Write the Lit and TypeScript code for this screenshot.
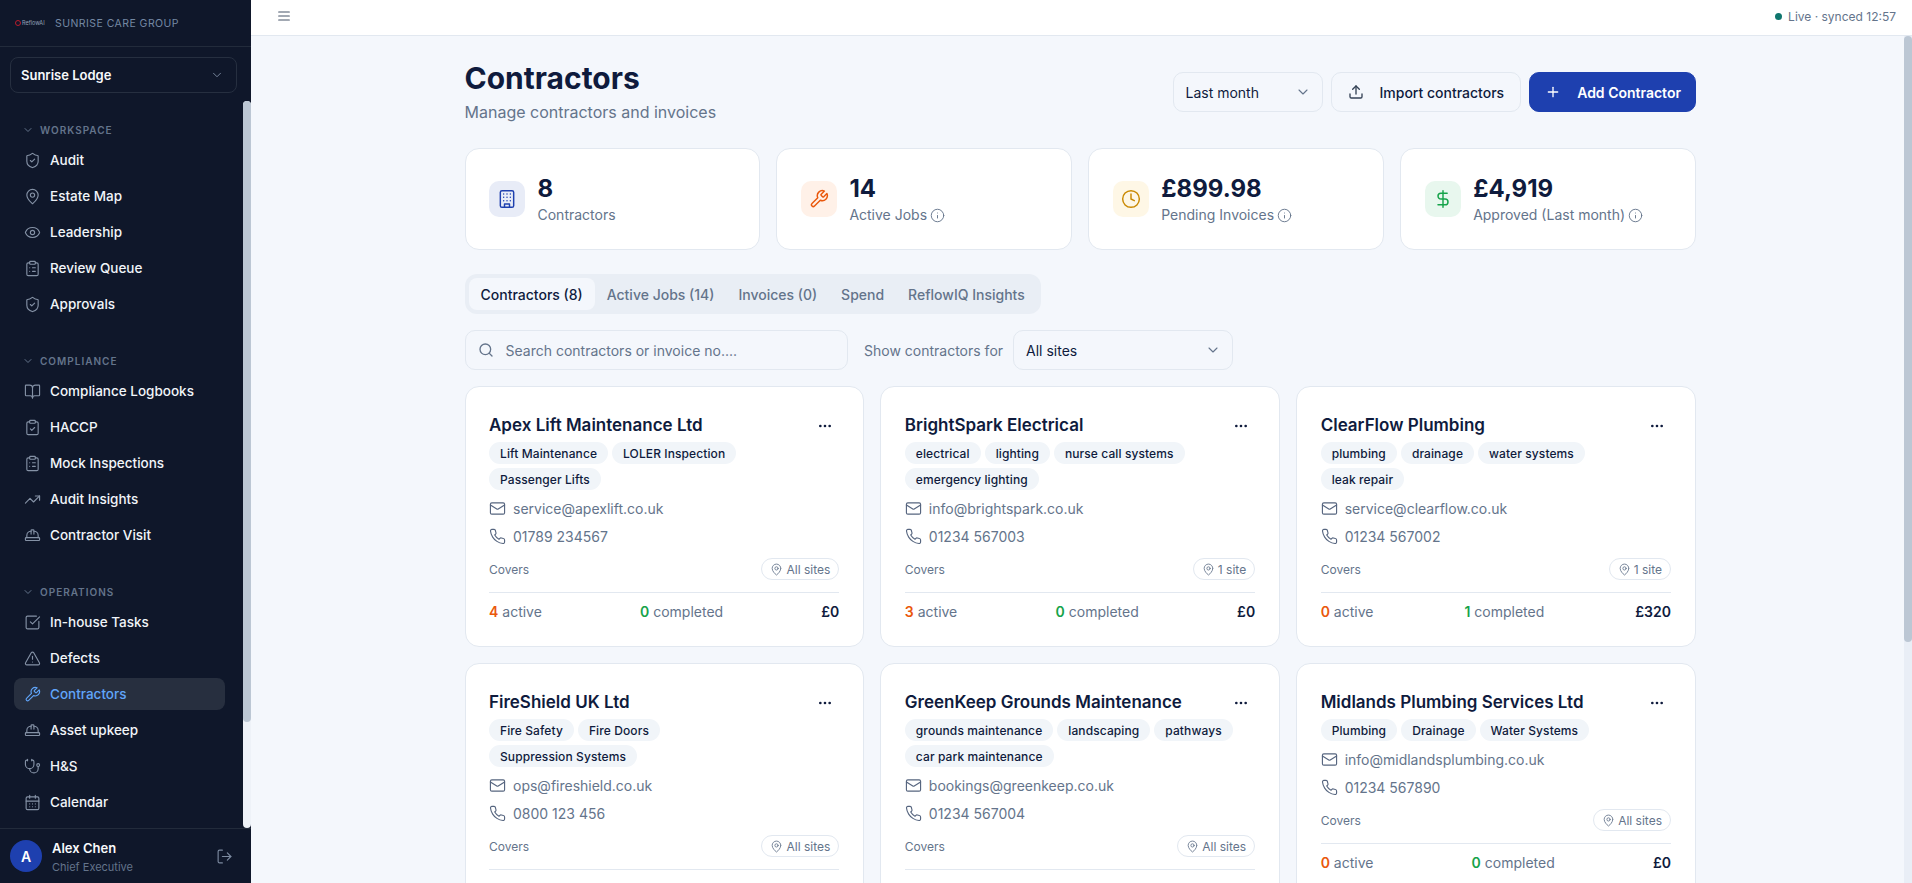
import { LitElement, html, css, svg } from 'lit';
import { customElement } from 'lit/decorators.js';

// lucide-style icon bodies, all on a 24 box
const ICONS: Record<string, unknown> = {
  shield: svg`<path d="M20 13c0 5-3.5 7.5-7.66 8.95a1 1 0 0 1-.67-.01C7.5 20.5 4 18 4 13V6a1 1 0 0 1 1-1c2 0 4.5-1.2 6.24-2.72a1.17 1.17 0 0 1 1.52 0C14.51 3.81 17 5 19 5a1 1 0 0 1 1 1z"/><path d="m9 12 2 2 4-4"/>`,
  pin: svg`<path d="M20 10c0 4.993-5.539 10.193-7.399 11.799a1 1 0 0 1-1.202 0C9.539 20.193 4 14.993 4 10a8 8 0 0 1 16 0"/><circle cx="12" cy="10" r="3"/>`,
  eye: svg`<path d="M2.062 12.348a1 1 0 0 1 0-.696 10.75 10.75 0 0 1 19.876 0 1 1 0 0 1 0 .696 10.75 10.75 0 0 1-19.876 0"/><circle cx="12" cy="12" r="3"/>`,
  list: svg`<rect x="8" y="2" width="8" height="4" rx="1"/><path d="M16 4h2a2 2 0 0 1 2 2v14a2 2 0 0 1-2 2H6a2 2 0 0 1-2-2V6a2 2 0 0 1 2-2h2"/><path d="M12 11h4"/><path d="M12 16h4"/><path d="M8 11h.01"/><path d="M8 16h.01"/>`,
  book: svg`<path d="M12 7v14"/><path d="M3 18a1 1 0 0 1-1-1V4a1 1 0 0 1 1-1h5a4 4 0 0 1 4 4 4 4 0 0 1 4-4h5a1 1 0 0 1 1 1v13a1 1 0 0 1-1 1h-6a3 3 0 0 0-3 3 3 3 0 0 0-3-3z"/>`,
  clipcheck: svg`<rect x="8" y="2" width="8" height="4" rx="1"/><path d="M16 4h2a2 2 0 0 1 2 2v14a2 2 0 0 1-2 2H6a2 2 0 0 1-2-2V6a2 2 0 0 1 2-2h2"/><path d="m9 14 2 2 4-4"/>`,
  trend: svg`<path d="M16 7h6v6"/><path d="m22 7-8.5 8.5-5-5L2 17"/>`,
  hat: svg`<path d="M10 10V5a1 1 0 0 1 1-1h2a1 1 0 0 1 1 1v5"/><path d="M14 6a6 6 0 0 1 6 6v3"/><path d="M4 15v-3a6 6 0 0 1 6-6"/><rect x="2" y="15" width="20" height="4" rx="1"/>`,
  check: svg`<path d="M21 10.5V19a2 2 0 0 1-2 2H5a2 2 0 0 1-2-2V5a2 2 0 0 1 2-2h12.5"/><path d="m9 11 3 3L22 4"/>`,
  alert: svg`<path d="m21.73 18-8-14a2 2 0 0 0-3.48 0l-8 14A2 2 0 0 0 4 21h16a2 2 0 0 0 1.73-3"/><path d="M12 9v4"/><path d="M12 17h.01"/>`,
  wrench: svg`<path d="M14.7 6.3a1 1 0 0 0 0 1.4l1.6 1.6a1 1 0 0 0 1.4 0l3.77-3.77a6 6 0 0 1-7.94 7.94l-6.91 6.91a2.12 2.12 0 0 1-3-3l6.91-6.91a6 6 0 0 1 7.94-7.94l-3.76 3.76z"/>`,
  steth: svg`<path d="M11 2v2"/><path d="M5 2v2"/><path d="M5 3H4a2 2 0 0 0-2 2v4a6 6 0 0 0 12 0V5a2 2 0 0 0-2-2h-1"/><path d="M8 15a6 6 0 0 0 12 0v-3"/><circle cx="20" cy="10" r="2"/>`,
  calendar: svg`<path d="M8 2v4"/><path d="M16 2v4"/><rect x="3" y="4" width="18" height="18" rx="2"/><path d="M3 10h18"/><path d="M8 14h.01"/><path d="M12 14h.01"/><path d="M16 14h.01"/><path d="M8 18h.01"/><path d="M12 18h.01"/><path d="M16 18h.01"/>`,
  logout: svg`<path d="m16 17 5-5-5-5"/><path d="M21 12H9"/><path d="M9 21H5a2 2 0 0 1-2-2V5a2 2 0 0 1 2-2h4"/>`,
  chevron: svg`<path d="m6 9 6 6 6-6"/>`,
  menu: svg`<path d="M4 12h16"/><path d="M4 18h16"/><path d="M4 6h16"/>`,
  upload: svg`<path d="M21 15v4a2 2 0 0 1-2 2H5a2 2 0 0 1-2-2v-4"/><path d="m17 8-5-5-5 5"/><path d="M12 3v12"/>`,
  plus: svg`<path d="M5 12h14"/><path d="M12 5v14"/>`,
  building: svg`<rect x="4" y="2" width="16" height="20" rx="2"/><path d="M9 22v-4h6v4"/><path d="M8 6h.01"/><path d="M16 6h.01"/><path d="M12 6h.01"/><path d="M12 10h.01"/><path d="M12 14h.01"/><path d="M16 10h.01"/><path d="M16 14h.01"/><path d="M8 10h.01"/><path d="M8 14h.01"/>`,
  clock: svg`<circle cx="12" cy="12" r="10"/><path d="M12 6v6l4 2"/>`,
  dollar: svg`<path d="M12 2v20"/><path d="M17 5H9.5a3.5 3.5 0 0 0 0 7h5a3.5 3.5 0 0 1 0 7H6"/>`,
  info: svg`<circle cx="12" cy="12" r="10"/><path d="M12 16v-4"/><path d="M12 8h.01"/>`,
  search: svg`<circle cx="11" cy="11" r="8"/><path d="m21 21-4.3-4.3"/>`,
  more: svg`<circle cx="12" cy="12" r="1"/><circle cx="19" cy="12" r="1"/><circle cx="5" cy="12" r="1"/>`,
  mail: svg`<rect x="2" y="4" width="20" height="16" rx="2"/><path d="m22 7-8.97 5.7a1.94 1.94 0 0 1-2.06 0L2 7"/>`,
  phone: svg`<path d="M22 16.92v3a2 2 0 0 1-2.18 2 19.79 19.79 0 0 1-8.63-3.07 19.5 19.5 0 0 1-6-6 19.79 19.79 0 0 1-3.07-8.67A2 2 0 0 1 4.11 2h3a2 2 0 0 1 2 1.72 12.84 12.84 0 0 0 .7 2.81 2 2 0 0 1-.45 2.11L8.09 9.91a16 16 0 0 0 6 6l1.27-1.27a2 2 0 0 1 2.11-.45 12.84 12.84 0 0 0 2.81.7A2 2 0 0 1 22 16.92z"/>`,
};

const icon = (name: string, size = 16, stroke = 2) => html`<svg
  width=${size}
  height=${size}
  viewBox="0 0 24 24"
  fill="none"
  stroke="currentColor"
  stroke-width=${stroke}
  stroke-linecap="round"
  stroke-linejoin="round"
  style="flex:none;display:block"
>${ICONS[name]}</svg>`;

const NAV = [
  {
    title: 'WORKSPACE',
    items: [
      ['shield', 'Audit'],
      ['pin', 'Estate Map'],
      ['eye', 'Leadership'],
      ['list', 'Review Queue'],
      ['shield', 'Approvals'],
    ],
  },
  {
    title: 'COMPLIANCE',
    items: [
      ['book', 'Compliance Logbooks'],
      ['clipcheck', 'HACCP'],
      ['list', 'Mock Inspections'],
      ['trend', 'Audit Insights'],
      ['hat', 'Contractor Visit'],
    ],
  },
  {
    title: 'OPERATIONS',
    items: [
      ['check', 'In-house Tasks'],
      ['alert', 'Defects'],
      ['wrench', 'Contractors'],
      ['hat', 'Asset upkeep'],
      ['steth', 'H&S'],
      ['calendar', 'Calendar'],
    ],
  },
];

const STATS = [
  { icon: 'building', tone: 'blue', value: '8', label: 'Contractors', info: false },
  { icon: 'wrench', tone: 'orange', value: '14', label: 'Active Jobs', info: true },
  { icon: 'clock', tone: 'yellow', value: '£899.98', label: 'Pending Invoices', info: true },
  { icon: 'dollar', tone: 'green', value: '£4,919', label: 'Approved (Last month)', info: true },
];

const TABS = ['Contractors (8)', 'Active Jobs (14)', 'Invoices (0)', 'Spend', 'ReflowIQ Insights'];

// tags are kept per row, the reference breaks them earlier than plain wrapping would
const CONTRACTORS = [
  { name: 'Apex Lift Maintenance Ltd', tags: [['Lift Maintenance', 'LOLER Inspection'], ['Passenger Lifts']], email: 'service@apexlift.co.uk', phone: '01789 234567', covers: 'All sites', active: 4, done: 0, total: '£0' },
  { name: 'BrightSpark Electrical', tags: [['electrical', 'lighting', 'nurse call systems'], ['emergency lighting']], email: 'info@brightspark.co.uk', phone: '01234 567003', covers: '1 site', active: 3, done: 0, total: '£0' },
  { name: 'ClearFlow Plumbing', tags: [['plumbing', 'drainage', 'water systems'], ['leak repair']], email: 'service@clearflow.co.uk', phone: '01234 567002', covers: '1 site', active: 0, done: 1, total: '£320' },
  { name: 'FireShield UK Ltd', tags: [['Fire Safety', 'Fire Doors'], ['Suppression Systems']], email: 'ops@fireshield.co.uk', phone: '0800 123 456', covers: 'All sites', active: 3, done: 0, total: '£0' },
  { name: 'GreenKeep Grounds Maintenance', tags: [['grounds maintenance', 'landscaping', 'pathways'], ['car park maintenance']], email: 'bookings@greenkeep.co.uk', phone: '01234 567004', covers: 'All sites', active: 2, done: 0, total: '£0' },
  { name: 'Midlands Plumbing Services Ltd', tags: [['Plumbing', 'Drainage', 'Water Systems']], email: 'info@midlandsplumbing.co.uk', phone: '01234 567890', covers: 'All sites', active: 0, done: 0, total: '£0' },
  { name: 'SafeAir Ventilation', tags: [['ventilation', 'air quality'], ['duct cleaning']], email: 'hello@safeair.co.uk', phone: '01234 567005', covers: '1 site', active: 1, done: 0, total: '£0' },
  { name: 'TotalCare Cleaning Ltd', tags: [['deep cleaning', 'kitchen hygiene']], email: 'jobs@totalcare.co.uk', phone: '01234 567006', covers: 'All sites', active: 1, done: 0, total: '£0' },
];

@customElement('app-root')
export class AppRoot extends LitElement {
  static override styles = css`
    :host {
      display: flex;
      height: 100vh;
      overflow: hidden;
      font-family: Inter, 'Noto Sans', sans-serif;
      color: #0f1b3d;
      background: #f4f7fc;
    }

    /* scrollbars: headless hides the native ones, so the tracks are drawn */
    .track {
      width: 8px;
      flex: none;
      background: #e9eef6;
    }
    .thumb {
      background: #bcc7d4;
      border-radius: 4px;
    }
    .nav-track {
      border-radius: 4px;
      background: #eef2f8;
    }
    .nav-track .thumb {
      height: 621px;
    }
    .main-track .thumb {
      height: 606px;
    }
    .nav,
    .scroll {
      flex: 1;
      min-width: 0;
      overflow-y: auto;
      scrollbar-width: none;
    }

    /* sidebar */
    .sidebar {
      width: 251px;
      flex: none;
      display: flex;
      flex-direction: column;
      background: #0f172a;
    }
    .brand {
      height: 46px;
      flex: none;
      display: flex;
      align-items: center;
      gap: 13px;
      padding-left: 15px;
      border-bottom: 1px solid #222b3b;
    }
    .logo {
      display: flex;
      align-items: center;
      gap: 1px;
      width: 27px;
      font-size: 5.5px;
      color: #94a3b8;
      white-space: nowrap;
    }
    .ring {
      width: 6px;
      height: 6px;
      flex: none;
      border: 1.5px solid #b91c2c;
      border-radius: 50%;
      box-sizing: border-box;
    }
    .org {
      font-size: 10.5px;
      letter-spacing: 0.45px;
      color: #7488a3;
    }
    .site-wrap {
      flex: none;
      padding: 10px 14px 8px 10px;
    }
    .site {
      height: 36px;
      box-sizing: border-box;
      display: flex;
      align-items: center;
      justify-content: space-between;
      padding: 0 12px 0 10px;
      border: 1px solid #262f40;
      border-radius: 8px;
      font-size: 13px;
      font-weight: 600;
      color: #f8fafc;
    }
    .site svg {
      color: #7c8aa0;
    }
    .nav-row {
      flex: 1;
      min-height: 0;
      display: flex;
    }
    .nav {
      padding: 21px 18px 0 14px;
    }
    .section + .section {
      margin-top: 33px;
    }
    .section-title {
      height: 16px;
      display: flex;
      align-items: center;
      gap: 6px;
      padding-left: 8px;
      margin-bottom: 6px;
      font-size: 10px;
      font-weight: 600;
      letter-spacing: 1px;
      color: #64748b;
    }
    .items {
      display: flex;
      flex-direction: column;
      gap: 4px;
    }
    .item {
      height: 32px;
      display: flex;
      align-items: center;
      gap: 9px;
      padding-left: 10px;
      border-radius: 8px;
      font-size: 13.5px;
      font-weight: 500;
      color: #f1f5f9;
    }
    .item svg {
      color: #8592a6;
    }
    .item.active {
      background: #272f3f;
      color: #60a5fa;
    }
    .item.active svg {
      color: #60a5fa;
    }
    .user {
      height: 55px;
      flex: none;
      box-sizing: border-box;
      display: flex;
      align-items: center;
      gap: 10px;
      padding: 0 18px 0 10px;
      border-top: 1px solid #222b3b;
    }
    .avatar {
      width: 32px;
      height: 32px;
      flex: none;
      display: flex;
      align-items: center;
      justify-content: center;
      border-radius: 50%;
      background: #1e40af;
      color: #fff;
      font-size: 14px;
      font-weight: 600;
    }
    .who {
      flex: 1;
      display: flex;
      flex-direction: column;
      gap: 3px;
      padding-top: 2px;
    }
    .who b {
      font-size: 13px;
      line-height: 16px;
      font-weight: 600;
      color: #f8fafc;
    }
    .who span {
      font-size: 11px;
      line-height: 16px;
      color: #64748b;
    }
    .user > svg {
      color: #7c8aa0;
    }

    /* main column */
    .main {
      flex: 1;
      min-width: 0;
      display: flex;
      flex-direction: column;
    }
    .topbar {
      height: 36px;
      flex: none;
      box-sizing: border-box;
      display: flex;
      align-items: center;
      justify-content: space-between;
      padding: 0 16px 3px 25px;
      background: #fff;
      border-bottom: 1px solid #e2e8f0;
      color: #475569;
    }
    .live {
      display: flex;
      align-items: center;
      gap: 6px;
      font-size: 12px;
      color: #64748b;
    }
    .dot {
      width: 7px;
      height: 7px;
      border-radius: 50%;
      background: #0f766e;
    }
    .main-row {
      flex: 1;
      min-height: 0;
      display: flex;
    }
    .content {
      width: 1231.5px;
      margin-left: 213.5px;
      padding: 24px 0;
      display: flex;
      flex-direction: column;
      gap: 24px;
    }
    .head {
      display: flex;
      align-items: center;
      justify-content: space-between;
    }
    h1 {
      margin: 0 0 4px;
      font-size: 30px;
      line-height: 36px;
      font-weight: 700;
    }
    .sub {
      font-size: 16px;
      line-height: 24px;
      color: #64748b;
    }
    .actions {
      display: flex;
      gap: 8px;
    }
    .ctl {
      height: 40px;
      box-sizing: border-box;
      display: flex;
      align-items: center;
      border: 1px solid #e2e8f0;
      border-radius: 10px;
      font-size: 14px;
    }
    .select {
      justify-content: space-between;
      padding: 0 11px 0 12px;
    }
    .select svg {
      color: #64748b;
    }
    .period {
      width: 150px;
    }
    .btn {
      gap: 16px;
      padding: 0 16px;
      font-weight: 500;
    }
    .btn svg {
      color: #334155;
    }
    .btn.primary {
      padding: 0 14px 0 15px;
      background: #1e40af;
      border-color: #1e40af;
      color: #fff;
      font-weight: 600;
    }
    .btn.primary svg {
      color: #fff;
    }
    .stats {
      display: grid;
      grid-template-columns: repeat(4, 1fr);
      gap: 16px;
    }
    .panel {
      background: #fff;
      border: 1px solid #e2e8f0;
      border-radius: 14px;
    }
    .stat {
      display: flex;
      align-items: center;
      gap: 12.5px;
      padding: 24px 24px 24px 23.5px;
    }
    .stat-icon {
      width: 36px;
      height: 36px;
      flex: none;
      display: flex;
      align-items: center;
      justify-content: center;
      border-radius: 10px;
    }
    .blue {
      background: #e8ecf7;
      color: #1e40af;
    }
    .orange {
      background: #fff1e8;
      color: #ea580c;
    }
    .yellow {
      background: #fef7e6;
      color: #ca8a04;
    }
    .green {
      background: #e8f7ee;
      color: #16a34a;
    }
    .value {
      font-size: 24px;
      line-height: 32px;
      font-weight: 700;
    }
    .label {
      display: flex;
      align-items: center;
      gap: 3px;
      font-size: 14px;
      line-height: 20px;
      color: #64748b;
    }
    .tabs-area {
      display: flex;
      flex-direction: column;
      gap: 16px;
    }
    .tabs {
      align-self: flex-start;
      display: flex;
      padding: 4px;
      background: #e9eef5;
      border-radius: 12px;
    }
    .tab {
      height: 32px;
      display: flex;
      align-items: center;
      padding: 0 12px;
      border-radius: 8px;
      font-size: 14px;
      font-weight: 500;
      color: #64748b;
    }
    .tab.active {
      background: #f4f7fc;
      color: #0f1b3d;
    }
    .filters {
      display: flex;
      align-items: center;
    }
    .search {
      width: 383.5px;
      gap: 12px;
      padding: 0 12px;
      color: #64748b;
    }
    .for {
      margin: 0 10px 0 16px;
      font-size: 14px;
      color: #64748b;
    }
    .sites {
      width: 220px;
    }
    .grid {
      display: grid;
      grid-template-columns: repeat(3, 1fr);
      gap: 16px;
    }
    .card {
      padding: 23px 24px 25px 23.5px;
    }
    .card-top {
      height: 32px;
      display: flex;
      justify-content: space-between;
      align-items: flex-start;
    }
    .card-name {
      padding-top: 1px;
      font-size: 17px;
      line-height: 28px;
      font-weight: 600;
    }
    .more {
      width: 28px;
      height: 32px;
      display: flex;
      align-items: center;
      justify-content: center;
    }
    .tags {
      display: flex;
      flex-direction: column;
      gap: 4px;
      margin-bottom: 8px;
    }
    .tag-row {
      display: flex;
      gap: 4px;
    }
    .tag {
      height: 22px;
      display: flex;
      align-items: center;
      padding: 0 11px;
      border-radius: 11px;
      background: #f1f5f9;
      font-size: 12px;
      font-weight: 500;
      letter-spacing: 0.1px;
    }
    .contact {
      height: 20px;
      display: flex;
      align-items: center;
      gap: 7px;
      margin-bottom: 8px;
      font-size: 14px;
      color: #64748b;
    }
    .contact svg {
      color: #56657f;
    }
    .covers {
      display: flex;
      align-items: center;
      justify-content: space-between;
      margin-top: 12px;
      padding-bottom: 12px;
      border-bottom: 1px solid #e2e8f0;
      font-size: 12px;
      color: #64748b;
    }
    .pill {
      height: 22px;
      box-sizing: border-box;
      display: flex;
      align-items: center;
      gap: 3px;
      padding: 0 8px;
      border: 1px solid #e2e8f0;
      border-radius: 11px;
    }
    .counts {
      display: flex;
      align-items: center;
      justify-content: space-between;
      height: 20px;
      margin-top: 8px;
      font-size: 14px;
      color: #64748b;
    }
    .counts b {
      font-weight: 600;
    }
    .num-active {
      color: #ea580c;
    }
    .num-done {
      color: #16a34a;
    }
    .counts .sum {
      color: #0f1b3d;
    }
  `;

  private renderNav() {
    return NAV.map(
      (section) => html`
        <div class="section">
          <div class="section-title">${icon('chevron', 12, 2)}${section.title}</div>
          <div class="items">
            ${section.items.map(
              ([ic, label]) => html`
                <div class="item ${label === 'Contractors' ? 'active' : ''}">${icon(ic, 17, 1.6)}${label}</div>
              `
            )}
          </div>
        </div>
      `
    );
  }

  private renderCard(c: (typeof CONTRACTORS)[number]) {
    return html`
      <div class="panel card">
        <div class="card-top">
          <div class="card-name">${c.name}</div>
          <div class="more">${icon('more', 16, 2)}</div>
        </div>
        <div class="tags">
          ${c.tags.map(
            (row) => html`<div class="tag-row">${row.map((t) => html`<span class="tag">${t}</span>`)}</div>`
          )}
        </div>
        <div class="contact">${icon('mail', 17, 1.6)}${c.email}</div>
        <div class="contact">${icon('phone', 17, 1.6)}${c.phone}</div>
        <div class="covers">
          <span>Covers</span>
          <span class="pill">${icon('pin', 13, 1.6)}${c.covers}</span>
        </div>
        <div class="counts">
          <span><b class="num-active">${c.active}</b> active</span>
          <span><b class="num-done">${c.done}</b> completed</span>
          <b class="sum">${c.total}</b>
        </div>
      </div>
    `;
  }

  override render() {
    return html`
      <aside class="sidebar">
        <div class="brand">
          <div class="logo"><span class="ring"></span>ReflowAI</div>
          <div class="org">SUNRISE CARE GROUP</div>
        </div>
        <div class="site-wrap">
          <div class="site">Sunrise Lodge ${icon('chevron', 14, 1.6)}</div>
        </div>
        <div class="nav-row">
          <nav class="nav">${this.renderNav()}</nav>
          <div class="track nav-track"><div class="thumb"></div></div>
        </div>
        <div class="user">
          <div class="avatar">A</div>
          <div class="who"><b>Alex Chen</b><span>Chief Executive</span></div>
          ${icon('logout', 17, 1.6)}
        </div>
      </aside>

      <div class="main">
        <header class="topbar">
          ${icon('menu', 16, 1.6)}
          <div class="live"><span class="dot"></span>Live · synced 12:57</div>
        </header>
        <div class="main-row">
          <div class="scroll">
            <div class="content">
              <div class="head">
                <div>
                  <h1>Contractors</h1>
                  <div class="sub">Manage contractors and invoices</div>
                </div>
                <div class="actions">
                  <div class="ctl select period">Last month ${icon('chevron', 16, 1.6)}</div>
                  <div class="ctl btn">${icon('upload', 16, 2)}Import contractors</div>
                  <div class="ctl btn primary">${icon('plus', 16, 2)}Add Contractor</div>
                </div>
              </div>

              <div class="stats">
                ${STATS.map(
                  (s) => html`
                    <div class="panel stat">
                      <div class="stat-icon ${s.tone}">${icon(s.icon, 20, 1.75)}</div>
                      <div>
                        <div class="value">${s.value}</div>
                        <div class="label">${s.label}${s.info ? icon('info', 15, 1.5) : ''}</div>
                      </div>
                    </div>
                  `
                )}
              </div>

              <div class="tabs-area">
                <div class="tabs">
                  ${TABS.map((t, i) => html`<div class="tab ${i === 0 ? 'active' : ''}">${t}</div>`)}
                </div>
                <div class="filters">
                  <div class="ctl search">${icon('search', 16, 2)}<span>Search contractors or invoice no....</span></div>
                  <span class="for">Show contractors for</span>
                  <div class="ctl select sites">All sites ${icon('chevron', 16, 1.6)}</div>
                </div>
                <div class="grid">${CONTRACTORS.map((c) => this.renderCard(c))}</div>
              </div>
            </div>
          </div>
          <div class="track main-track"><div class="thumb"></div></div>
        </div>
      </div>
    `;
  }
}
